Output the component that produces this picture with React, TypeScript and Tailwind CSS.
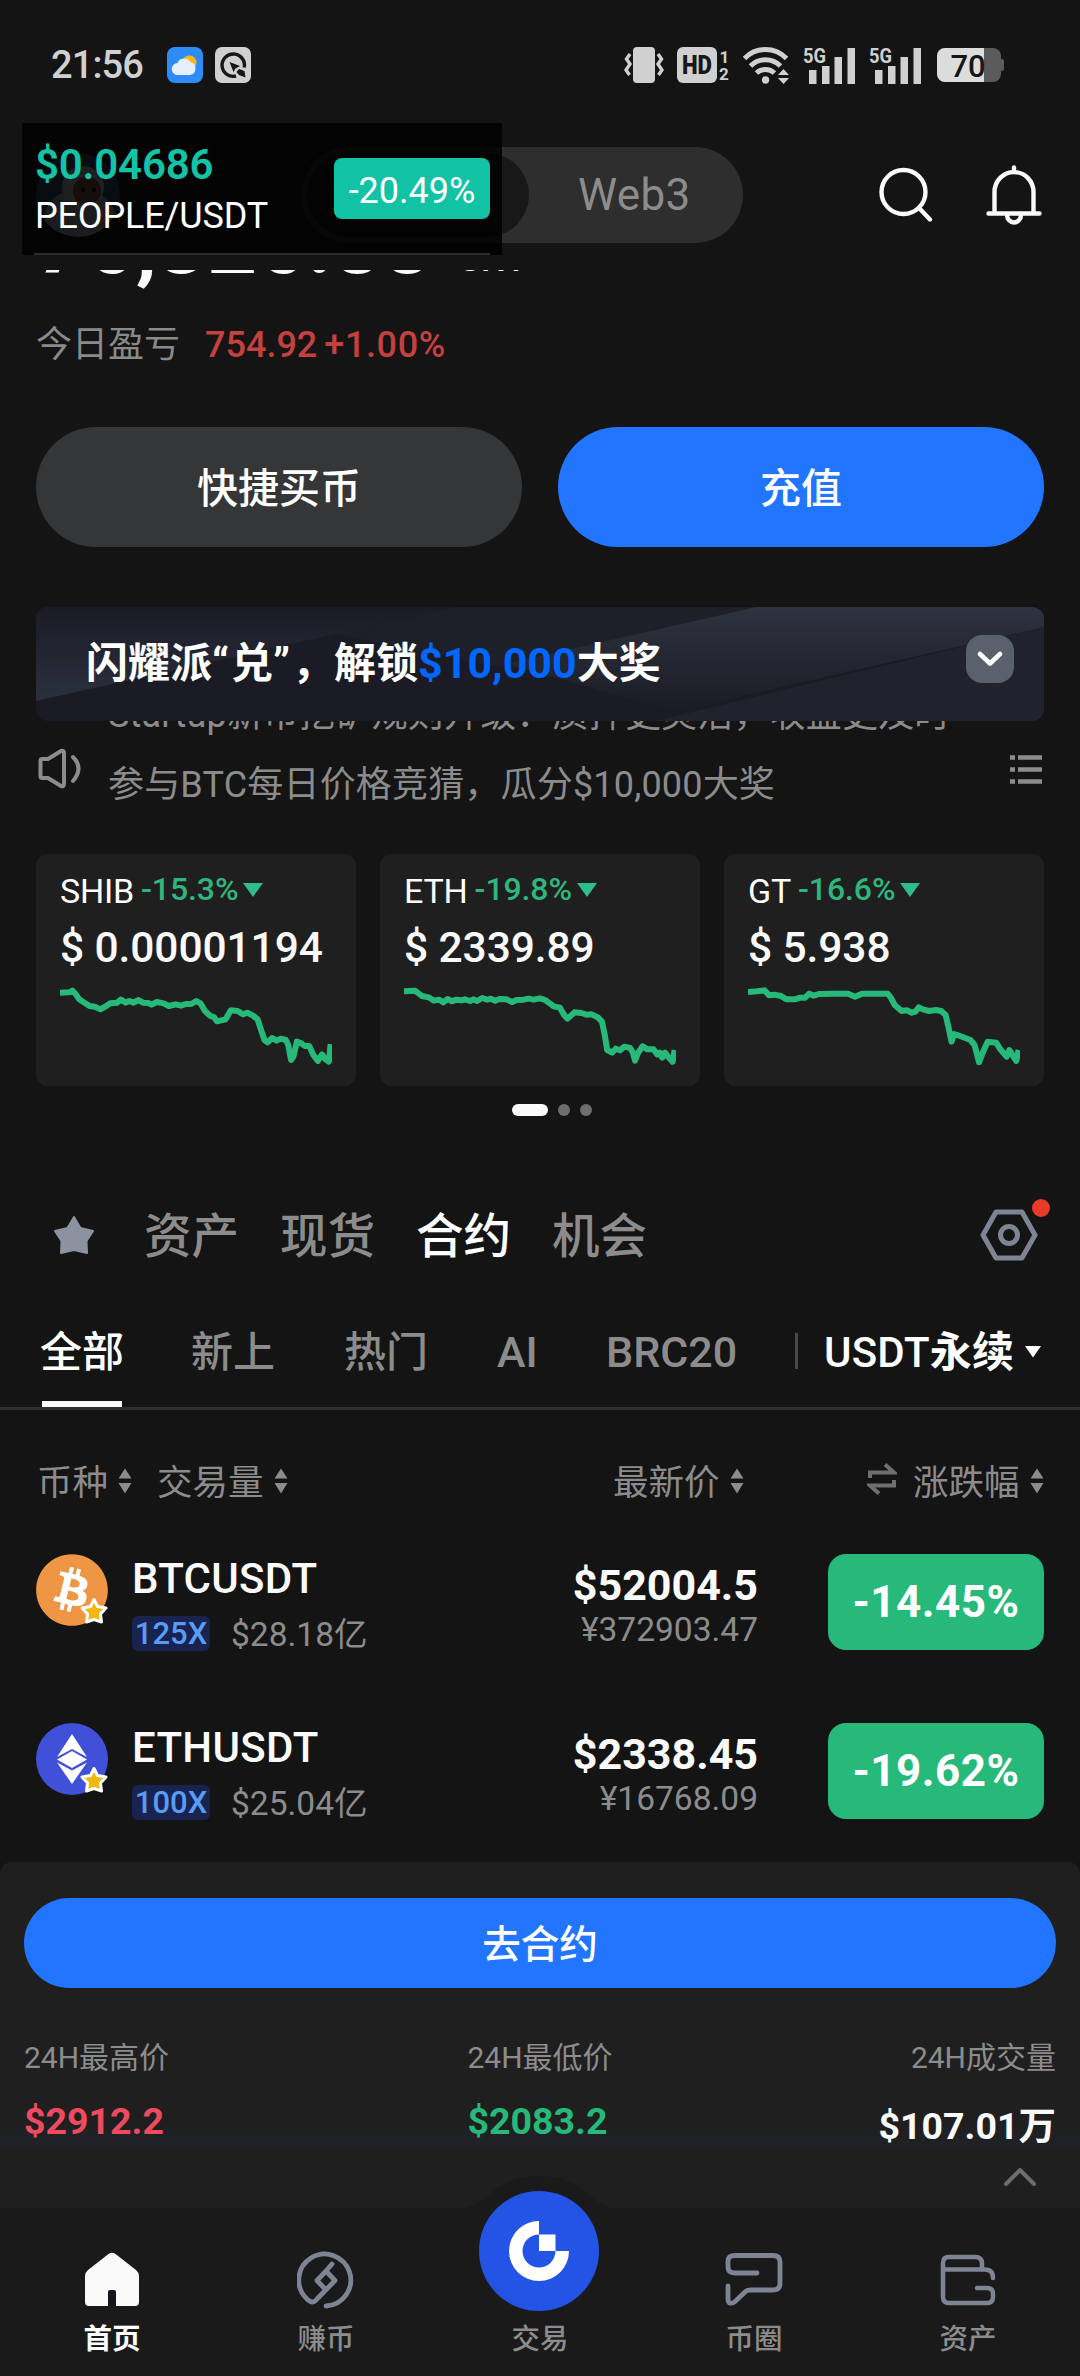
import React from 'react';
import { FaBitcoin } from 'react-icons/fa';

const coins = [
  {
    name: 'SHIB',
    change: '-15.3%',
    price: '0.00001194',
    points:
      '0,23 26,22 36,17 44,25 56,43 71,53 86,63 101,65 117,73 131,65 146,55 166,53 177,44 191,53 201,48 214,53 228,45 241,53 256,54 266,59 281,51 301,55 316,63 336,58 351,62 366,57 381,57 396,48 408,55 421,78 436,92 448,97 456,109 481,103 496,76 516,78 532,88 544,83 561,92 574,103 584,135 594,165 603,172 616,159 629,167 641,161 656,165 663,180 671,225 678,215 688,170 701,175 711,183 724,183 736,210 749,228 761,208 771,223 781,230 786,177',
  },
  {
    name: 'ETH',
    change: '-19.8%',
    price: '2339.89',
    points:
      '0,19 32,17 52,33 72,37 87,47 102,44 114,52 127,42 139,49 152,44 167,46 177,43 192,48 202,43 212,48 227,39 242,44 252,41 265,47 277,42 297,43 314,51 327,45 347,44 362,41 377,44 395,40 410,45 435,64 453,68 465,90 475,101 495,82 515,84 530,89 545,88 563,97 575,110 583,150 590,195 605,203 615,191 627,196 640,185 657,189 665,203 671,227 680,203 693,184 707,193 725,193 735,208 743,203 750,218 758,203 767,215 780,230 786,195',
  },
  {
    name: 'GT',
    change: '-16.6%',
    price: '5.938',
    points:
      '0,21 26,19 48,16 61,31 76,29 96,33 111,43 136,43 151,38 166,38 178,26 191,32 206,27 246,26 291,26 311,35 331,26 406,26 416,40 426,60 446,78 461,76 476,83 486,80 496,67 508,73 526,78 546,75 561,78 574,90 582,125 591,170 599,147 616,153 646,165 658,180 671,232 681,205 696,170 721,173 731,190 741,203 751,215 759,195 771,215 779,228 786,195',
  },
];

const markets = [
  { symbol: 'BTCUSDT', leverage: '125X', volume: '$28.18亿', price: '$52004.5', cny: '¥372903.47', change: '-14.45%' },
  { symbol: 'ETHUSDT', leverage: '100X', volume: '$25.04亿', price: '$2338.45', cny: '¥16768.09', change: '-19.62%' },
];

const SortIcon = () => (
  <svg width="14" height="26" viewBox="0 0 14 26" fill="#8c8c8c">
    <path d="M7 0.5 L13.5 10.5 H0.5 Z M7 25.5 L13.5 15 H0.5 Z" />
  </svg>
);

const Signal = () => (
  <svg className="overflow-visible" width="53" height="38" viewBox="0 0 53 38" fill="#d0d0d0">
    <text x="0" y="16.5" fontSize="21" fontWeight="700" textLength="23" lengthAdjust="spacingAndGlyphs">5G</text>
    <rect x="6" y="24" width="7.5" height="14" />
    <rect x="19" y="20" width="7.5" height="18" />
    <rect x="31.5" y="11" width="7.5" height="27" />
    <rect x="44.5" y="2" width="7.5" height="36" />
  </svg>
);

const StatusBar = () => (
  <div className="flex h-[130px] shrink-0 items-center pl-[51px] pr-[76px] text-[#d0d0d0]">
    <span className="w-[116px] text-[38px] font-medium leading-none tracking-[-0.9px]">21:56</span>
    <svg width="36" height="36" viewBox="0 0 36 36">
      <rect width="36" height="36" rx="8" fill="#2e8bf7" />
      <circle cx="22.5" cy="15.5" r="7" fill="#f9b91c" />
      <path d="M11 28 a6 6 0 0 1 -0.5 -12 a7 7 0 0 1 12.5 -1 a6.6 6.6 0 0 1 0 13 Z" fill="#e6f0fd" />
    </svg>
    <svg className="ml-3" width="36" height="36" viewBox="0 0 36 36">
      <rect width="36" height="36" rx="7" fill="#d0d0d0" />
      <path d="M21 29 A11.2 11.2 0 1 1 29.2 20.5" fill="none" stroke="#171717" strokeWidth="3.4" />
      <path d="M14.5 15 L25 19 L20.5 21.5 L18.5 25 Z" fill="#171717" />
      <path d="M24 22 l5.500 2 l1 6.500 l-6.500 -2.500 l-2.500 -3 Z" fill="#171717" />
    </svg>
    <div className="ml-auto flex items-center">
      <svg width="40" height="36" viewBox="0 0 40 36">
        <rect x="9" y="0" width="22" height="36" rx="4" fill="#d0d0d0" />
        <path d="M6 7 L2.500 12 L6 17 L2 23 L5.500 28 M34 7 L37.500 12 L34 17 L38 23 L34.500 28" fill="none" stroke="#d0d0d0" strokeWidth="3.400" />
      </svg>
      <svg className="ml-[13px] overflow-visible" width="52" height="36" viewBox="0 0 52 36">
        <rect width="40" height="36" rx="6" fill="#d0d0d0" />
        <text x="5" y="27" fontSize="25" fontWeight="900" fill="#171717" textLength="30" lengthAdjust="spacingAndGlyphs">HD</text>
        <text x="42.500" y="15.5" fontSize="17" fontWeight="700" fill="#d0d0d0">1</text>
        <text x="42" y="33" fontSize="17" fontWeight="700" fill="#d0d0d0">2</text>
      </svg>
      <svg className="ml-[14px]" width="46" height="38" viewBox="0 0 46 38" fill="none" stroke="#d0d0d0" strokeWidth="5">
        <path d="M1.500 12.500 A29 29 0 0 1 43.500 12.500" />
        <path d="M7.500 20 A21 21 0 0 1 37.500 20" />
        <path d="M13.500 27 A13 13 0 0 1 31.500 27" />
        <circle cx="22.500" cy="34" r="3.700" fill="#d0d0d0" stroke="none" />
        <path d="M35 29 h11 l-5.500 -6 Z M35 32 h11 l-5.500 6 Z" fill="#d0d0d0" stroke="none" />
      </svg>
      <div className="ml-[14px] flex gap-[13px]">
        <Signal />
        <Signal />
      </div>
      <svg className="ml-[15px] overflow-visible" width="67" height="34" viewBox="0 0 67 34">
        <rect width="64" height="34" rx="8" fill="#5b5b5b" />
        <rect x="63" y="11" width="4" height="12" rx="2" fill="#5b5b5b" />
        <path d="M8 0 H47 V34 H8 A8 8 0 0 1 0 26 V8 A8 8 0 0 1 8 0 Z" fill="#dcdcdc" />
        <text x="13.500" y="28.500" fontSize="31" fontWeight="500" fill="#151515">70</text>
      </svg>
    </div>
  </div>
);

const Header = () => (
  <div className="relative flex h-[140px] shrink-0 pt-[17px]">
    <svg className="ml-9 mt-1.5" width="84" height="84" viewBox="0 0 84 84">
      <defs>
        <clipPath id="avatar">
          <circle cx="42" cy="42" r="42" />
        </clipPath>
      </defs>
      <g clipPath="url(#avatar)">
        <rect width="84" height="84" fill="#34587a" />
        <ellipse cx="44" cy="66" rx="36" ry="30" fill="#b4bbc2" />
        <circle cx="47" cy="34" r="21" fill="#c8ced4" />
        <circle cx="51" cy="38" r="14" fill="#8a5f4d" />
        <circle cx="47" cy="37" r="2" fill="#111" />
        <circle cx="58" cy="37" r="2" fill="#111" />
      </g>
    </svg>
    <div className="ml-[181px] flex h-24 w-[442px] items-center rounded-full bg-[#2e2e2e] p-1.5">
      <div className="h-[84px] w-[222px] rounded-full bg-[#181818]" />
      <span className="ml-[49px] text-[44px] leading-none tracking-[0.4px] text-[#8c8c8c]">Web3</span>
    </div>
    <svg className="ml-[134px] mt-[19px]" width="58" height="58" viewBox="0 0 58 58" fill="none" stroke="#fafafa" strokeWidth="4.400" strokeLinecap="round">
      <circle cx="26.500" cy="26" r="22" />
      <path d="M43 43 L53 53.500" />
    </svg>
    <svg className="ml-[50px] mt-[17px]" width="58" height="62" viewBox="0 0 58 62" fill="none" stroke="#fafafa" strokeWidth="4.400" strokeLinecap="round">
      <path d="M29 3.500 V7 M9.500 47 V28 A19.500 20 0 0 1 48.500 28 V47 M3.500 49.500 H54.500 M22 51 A7 7.500 0 0 0 36 51" />
    </svg>

    {/* Floating ticker window */}
    <div className="absolute left-[22px] top-[-7px] flex h-[132px] w-[480px] bg-black/85 pl-[13px]">
      <div className="flex flex-col pt-[17px]">
        <span className="text-[42px] font-semibold leading-[50px] tracking-[-0.2px] text-[#12c3a5]">$0.04686</span>
        <span className="mt-[4px] text-[36px] leading-[44px] tracking-[-0.15px] text-white">PEOPLE/USDT</span>
      </div>
      <div className="absolute right-3 top-[35px] flex h-[61px] w-[156px] items-center justify-center rounded-lg bg-[#11c2a5] pt-1 text-[36px] text-white">
        -20.49%
      </div>
      <div className="absolute bottom-0 left-3 right-3 h-0.5 bg-[#2c2c2c]" />
    </div>
  </div>
);

const Balance = () => (
  <div className="px-9">
    <div className="h-[50px] overflow-hidden whitespace-nowrap">
      <div className="mt-[-77px] flex items-baseline leading-[100px] text-[#fafafa]">
        <span className="text-[87px] font-bold">76,326.88</span>
        <span className="relative top-[-2px] ml-[26px] text-[35px] font-medium">CNY</span>
      </div>
    </div>
    <div className="flex h-12 items-center pt-[2px] text-[36px]">
      <span className="text-[#8a8a8a]">今日盈亏</span>
      <span className="ml-[25px] font-medium text-[#c5403f]">754.92</span>
      <span className="ml-[7px] font-medium tracking-[0.6px] text-[#c5403f]">+1.00%</span>
    </div>
    <div className="mt-[59px] grid grid-cols-2 gap-9 text-[41px] font-medium text-white">
      <button className="h-[120px] rounded-full bg-[#353638] pt-[5px]">快捷买币</button>
      <button className="h-[120px] rounded-full bg-[#2275ff] pt-[5px]">充值</button>
    </div>
  </div>
);

const Banner = () => (
  <div className="mx-9 mt-[60px]">
    <div className="relative flex h-[114px] items-center justify-between overflow-hidden rounded-xl bg-[#1b1b25] pl-[50px] pr-[30px]">
      <svg className="absolute inset-0" width="1008" height="114" viewBox="0 0 1008 114">
        <defs>
          <linearGradient id="beamLeft" x1="0" y1="0" x2="0" y2="1">
            <stop offset="0" stopColor="#1b1b25" />
            <stop offset="1" stopColor="#2a303d" />
          </linearGradient>
          <linearGradient id="beamRight" x1="0" y1="0" x2="0" y2="1">
            <stop offset="0" stopColor="#2d333f" />
            <stop offset="1" stopColor="#1b1b25" />
          </linearGradient>
        </defs>
        <path d="M0 0 H420 L0 94 Z" fill="url(#beamLeft)" />
        <path d="M420 0 H720 L460 60 L300 27 Z" fill="#20232d" opacity="0.6" />
        <path d="M720 0 H1008 V20 L640 104 L470 57 Z" fill="url(#beamRight)" />
        <path d="M1008 20 V114 H620 Z" fill="#242833" opacity="0.6" />
      </svg>
      <p className="relative mb-[2px] text-[42px] font-bold text-white">
        闪耀派<span className="tracking-[2px]">“</span>兑<span className="tracking-[2px]">”</span>，解锁
        <span className="text-[43px] text-[#0068ff]">$10,000</span>大奖
      </p>
      <span className="relative mb-2.5 flex h-12 w-12 items-center justify-center rounded-2xl bg-[#5b616c]">
        <svg width="26" height="16" viewBox="0 0 26 16" fill="none" stroke="#fff" strokeWidth="4.500" strokeLinecap="round" strokeLinejoin="round">
          <path d="M3 3 L13 12.500 L23 3" />
        </svg>
      </span>
    </div>
    <div className="flex h-[100px] overflow-hidden">
      <svg className="ml-[2px] mt-[27px]" width="44" height="42" viewBox="0 0 44 42" fill="none" stroke="#8c8c8c" strokeWidth="4" strokeLinecap="round" strokeLinejoin="round">
        <path d="M4 11 H10 L23 3 Q26 2 26 5 V36 Q26 39 23 38 L10 30 H4 Q2.500 30 2.500 28 V13 Q2.500 11 4 11 Z" />
        <path d="M35 9 Q46 20 35 33" />
      </svg>
      <div className="ml-[26px] mt-[-41px] flex-1 whitespace-nowrap text-[36px] leading-[70px] tracking-[0.18px] text-[#8c8c8c]">
        <p>Startup新币挖矿规则升级：质押更灵活，收益更及时</p>
        <p>参与BTC每日价格竞猜，瓜分$10,000大奖</p>
      </div>
      <svg className="mr-[2px] mt-[34px]" width="32" height="30" viewBox="0 0 32 30" stroke="#8c8c8c" strokeWidth="4.400">
        <path d="M0 2.500 H5 M8 2.500 H32 M0 14.500 H5 M8 14.500 H32 M0 26.500 H5 M8 26.500 H32" />
      </svg>
    </div>
  </div>
);

const CoinCards = () => (
  <div className="mx-9 mt-[33px]">
    <div className="grid grid-cols-3 gap-6">
      {coins.map((coin) => (
        <div key={coin.name} className="h-[232px] rounded-xl bg-[#1f1f1f] px-6 pt-[19px]">
          <div className="flex h-9 items-center whitespace-nowrap leading-9">
            <span className="text-[34px] tracking-[-0.2px] text-white">{coin.name}</span>
            <span className="mb-1 ml-[7px] text-[32px] font-medium tracking-[-0.1px] text-[#2fb67c]">{coin.change}</span>
            <svg className="mb-[3px] ml-[5px]" width="20" height="14" viewBox="0 0 20 14">
              <path d="M0 0 H20 L10 14 Z" fill="#2dbd8a" />
            </svg>
          </div>
          <p className="mt-[12px] whitespace-nowrap text-[42.5px] font-medium leading-[54px] tracking-[-0.1px] text-[#fafafa]">$ {coin.price}</p>
          <svg className="mt-[10px]" width="272" height="80" viewBox="0 0 790 240" preserveAspectRatio="none">
            <polyline points={coin.points} fill="none" stroke="#26b97a" strokeWidth="6" strokeLinejoin="round" vectorEffect="non-scaling-stroke" />
          </svg>
        </div>
      ))}
    </div>
    <div className="mt-[18px] flex justify-center gap-2.5 pl-6">
      <span className="h-3 w-9 rounded-full bg-[#fafafa]" />
      <span className="h-3 w-3 rounded-full bg-[#6e6e6e]" />
      <span className="h-3 w-3 rounded-full bg-[#6e6e6e]" />
    </div>
  </div>
);

const MarketTabs = () => (
  <div>
    <div className="mt-[83px] flex h-[72px] items-center gap-10 pl-[53px] pr-[42px] text-[47.5px] font-medium leading-[72px] text-[#8c8c8c]">
      <svg className="mr-[9px]" width="42" height="42" viewBox="0 0 42 42">
        <path d="M21 3 L27.500 14 L40 17 L33.500 27 L34 39 L21 36 L8 39 L8.500 27 L2 17 L14.500 14 Z" fill="#8c92a0" stroke="#8c92a0" strokeWidth="2" strokeLinejoin="round" />
      </svg>
      <span className="w-24 pt-[3px]">资产</span>
      <span className="w-24 pt-[3px]">现货</span>
      <span className="w-24 pt-[3px] text-white">合约</span>
      <span className="w-24 pt-[3px]">机会</span>
      <div className="relative ml-auto">
        <svg width="58" height="52" viewBox="0 0 58 52" fill="none" stroke="#7e8494" strokeWidth="5" strokeLinejoin="round">
          <path d="M16 3 H42 L55 26 L42 49 H16 L3 26 Z" />
          <circle cx="29" cy="26" r="8.500" />
        </svg>
        <span className="absolute right-[-12px] top-[-10px] h-[18px] w-[18px] rounded-full bg-[#e83b28]" />
      </div>
    </div>
    <div className="mt-[44px] flex h-[95px] border-b-[3px] border-[#303030] pl-[40px] text-[42px] font-medium leading-[76px] text-[#8c8c8c]">
      <div className="relative w-[151px] text-white">
        全部
        <div className="absolute bottom-0 left-0.5 h-1.5 w-20 bg-[#fafafa]" />
      </div>
      <span className="w-[153px]">新上</span>
      <span className="w-[153px]">热门</span>
      <span className="w-[109px] text-[43px] leading-[74px]">AI</span>
      <span className="w-[189px] text-[43px] leading-[74px]">BRC20</span>
      <span className="mt-[18px] h-9 w-[3px] bg-[#4a4a4a]" />
      <span className="ml-[26px] tracking-[0.2px] text-white">USDT<b>永续</b></span>
      <svg className="ml-[11px] mt-[31px]" width="16" height="12" viewBox="0 0 16 12">
        <path d="M0 0 H16 L8 11.500 Z" fill="#fff" />
      </svg>
    </div>
  </div>
);

const CoinIcon = ({ symbol }: { symbol: string }) => (
  <div className="relative h-[72px] w-[72px]">
    {symbol === 'BTCUSDT' ? (
      <div className="rounded-full bg-[radial-gradient(circle,#fff_45%,transparent_46%)]">
        <FaBitcoin size={74} color="#ef9645" className="-ml-px -mt-px" />
      </div>
    ) : (
      <svg width="72" height="72" viewBox="0 0 72 72">
        <circle cx="36" cy="36" r="36" fill="#4150d8" />
        <path d="M36 11 L51 34 L36 26 L21 34 Z M36 28 L51 36.500 L36 45 L21 36.500 Z M21 39.500 L36 47.500 L51 39.500 L36 61 Z" fill="#fff" />
      </svg>
    )}
    <svg className="absolute bottom-0 right-[-1px]" width="30" height="30" viewBox="0 0 30 30">
      <path d="M15 3.500 L18.500 10.500 L27 12 L21.500 18 L22.500 26 L15 23.500 L7.500 26 L8.500 18 L3 12 L11.500 10.500 Z" fill="#f3b70f" stroke="#fff" strokeWidth="3" strokeLinejoin="round" />
    </svg>
  </div>
);

const MarketList = () => (
  <div className="px-9">
    <div className="mt-[35px] flex h-[72px] items-center text-[35.5px] leading-[72px] text-[#8c8c8c]">
      <span className="w-[82px] pl-px pt-[4px]">币种</span>
      <SortIcon />
      <span className="ml-[25px] w-[117px] pt-[4px]">交易量</span>
      <SortIcon />
      <span className="ml-[325px] w-[117px] pt-[4px]">最新价</span>
      <SortIcon />
      <svg className="ml-auto mr-[16px] mb-1" width="30" height="32" viewBox="0 0 30 32" fill="none" stroke="#6f6f6f" strokeWidth="4">
        <path d="M3 15 V9.500 H27 L18 1.500 M27 17 V22.500 H3 L12 30.500" />
      </svg>
      <span className="w-[117px] pt-[4px]">涨跌幅</span>
      <SortIcon />
    </div>
    <div className="mt-[37px] flex flex-col gap-[73px]">
      {markets.map((m) => (
        <div key={m.symbol} className="flex h-24">
          <CoinIcon symbol={m.symbol} />
          <div className="ml-6 flex-1">
            <p className="pt-px text-[42px] font-medium leading-[48px] tracking-[0.3px] text-[#fafafa]">{m.symbol}</p>
            <div className="mt-[12px] flex items-center">
              <span className="flex h-[35px] w-[78px] items-center justify-center rounded-md bg-[#18234f] pt-px text-[31px] font-medium text-[#5a9bf5]">
                {m.leverage}
              </span>
              <span className="ml-[21px] pt-[2px] text-[33.5px] leading-[35px] text-[#8c8c8c]">{m.volume}</span>
            </div>
          </div>
          <div className="mr-[70px] text-right">
            <p className="pt-[5px] text-[43px] font-bold leading-[52px] text-[#fafafa]">{m.price}</p>
            <p className="text-[33.5px] leading-[38px] text-[#8c8c8c]">{m.cny}</p>
          </div>
          <div className="flex h-24 w-[216px] items-center justify-center rounded-[18px] bg-[#26b97a] text-[44px] font-bold tracking-[0.5px] text-white">
            {m.change}
          </div>
        </div>
      ))}
    </div>
  </div>
);

const ContractPanel = () => (
  <div className="mt-[43px] h-[346px] shrink-0 rounded-t-xl bg-[#1f1f1f] bg-[linear-gradient(#1f1f1f_262px,#1f2125_272px,#1f2125_284px,#1f1f1f_287px)] px-6 pt-9">
    <button className="h-[90px] w-full rounded-full bg-[#2275ff] pt-[4px] text-[38.5px] font-medium text-white">去合约</button>
    <div className="mt-[48px] grid grid-cols-3 text-[30px] leading-[44px] text-[#8c8c8c]">
      <div>
        <p>24H最高价</p>
        <p className="mt-[19px] text-[37.5px] font-bold text-[#f04a61]">$2912.2</p>
      </div>
      <div className="justify-self-center">
        <p>24H最低价</p>
        <p className="mt-[19px] text-[37.5px] font-bold text-[#26b97a]">$2083.2</p>
      </div>
      <div className="text-right">
        <p>24H成交量</p>
        <p className="mt-[24px] text-[37.5px] font-bold text-[#fafafa]">$107.01万</p>
      </div>
    </div>
    <svg className="ml-auto mr-[19px] mt-[19px]" width="34" height="20" viewBox="0 0 34 20" fill="none" stroke="#6e6e6e" strokeWidth="4" strokeLinecap="round" strokeLinejoin="round">
      <path d="M3 17 L17 3 L31 17" />
    </svg>
  </div>
);

const navItems = [
  {
    label: '首页',
    icon: (
      <svg width="58" height="58" viewBox="0 0 58 58">
        <path d="M25.500 3 Q29 0.500 32.500 3 L53 19 Q56 21.500 56 25 V51 Q56 55 52 55 H6 Q2 55 2 51 V25 Q2 21.500 5 19 Z" fill="#fafafa" />
        <path d="M25 55 V41 Q25 39 27 39 H31 Q33 39 33 41 V55 Z" fill="#15151c" />
      </svg>
    ),
  },
  {
    label: '赚币',
    icon: (
      <svg width="58" height="58" viewBox="0 0 58 58" fill="none" stroke="#7e8494" strokeWidth="4.800" strokeLinecap="round" strokeLinejoin="round">
        <path d="M29 55 A26 26 0 1 0 10 48 Q16 54 20 48 L38 29.500 L29 20 L20 29.500 L28 38 M29 20 L35 13" />
      </svg>
    ),
  },
  { label: '交易', icon: <div className="h-[58px]" /> },
  {
    label: '币圈',
    icon: (
      <svg width="58" height="58" viewBox="0 0 58 58" fill="none" stroke="#7e8494" strokeWidth="4.800" strokeLinecap="round" strokeLinejoin="round">
        <path d="M32 22 H10 Q3 22 3 16 V10.500 Q3 4.500 10 4.500 H48 Q55 4.500 55 11 V32.500 Q55 39 48 39 H25 Q22 39 20 41 L9.500 51 Q3 54.500 3 48 V35" />
      </svg>
    ),
  },
  {
    label: '资产',
    icon: (
      <svg width="58" height="58" viewBox="0 0 58 58" fill="none" stroke="#7e8494" strokeWidth="4.500" strokeLinecap="round" strokeLinejoin="round">
        <path d="M4 18 V12 Q4 6 10 6 H36 Q43 6 43 12.500 V18 M4 18.500 H46 Q54 18.500 54 27 M4 18 V46 Q4 52 10 52 H48 Q54 52 54 46 V43 Q54 37 48 37 H38" />
      </svg>
    ),
  },
];

const BottomNav = () => (
  <div className="relative flex h-[168px] shrink-0 bg-[#1a1a1a] px-[5px] pt-[43px]">
    <svg className="absolute left-[454px] top-[-32px]" width="170" height="140" viewBox="0 0 170 140">
      <path d="M5 33 Q19 33 33 20 Q54 0 85 0 Q116 0 137 20 Q151 33 165 33 Z" fill="#1a1a1a" />
      <circle cx="85" cy="75" r="60" fill="#2354e6" />
      <path d="M85 45 A30 30 0 1 0 115 75 H101.500 A16.500 16.500 0 1 1 85 58.500 Z" fill="#fff" />
      <rect x="85" y="58.500" width="16.500" height="16.500" fill="#fff" />
    </svg>
    {navItems.map((item, idx) => (
      <div key={item.label} className="flex flex-1 flex-col items-center">
        {item.icon}
        <span className={idx === 0 ? 'relative mt-[11px] text-[28.5px] font-bold leading-10 text-white' : 'relative mt-[11px] text-[28.5px] font-medium leading-10 text-[#8c8c8c]'}>
          {item.label}
        </span>
      </div>
    ))}
  </div>
);

const App: React.FC = () => {
  return (
    <div className="flex h-[2376px] w-[1080px] flex-col overflow-hidden bg-[#141414] font-[Roboto,'Noto_Sans_CJK_SC',sans-serif]">
      <StatusBar />
      <Header />
      <Balance />
      <Banner />
      <CoinCards />
      <MarketTabs />
      <MarketList />
      <ContractPanel />
      <BottomNav />
    </div>
  );
};

export default App;
